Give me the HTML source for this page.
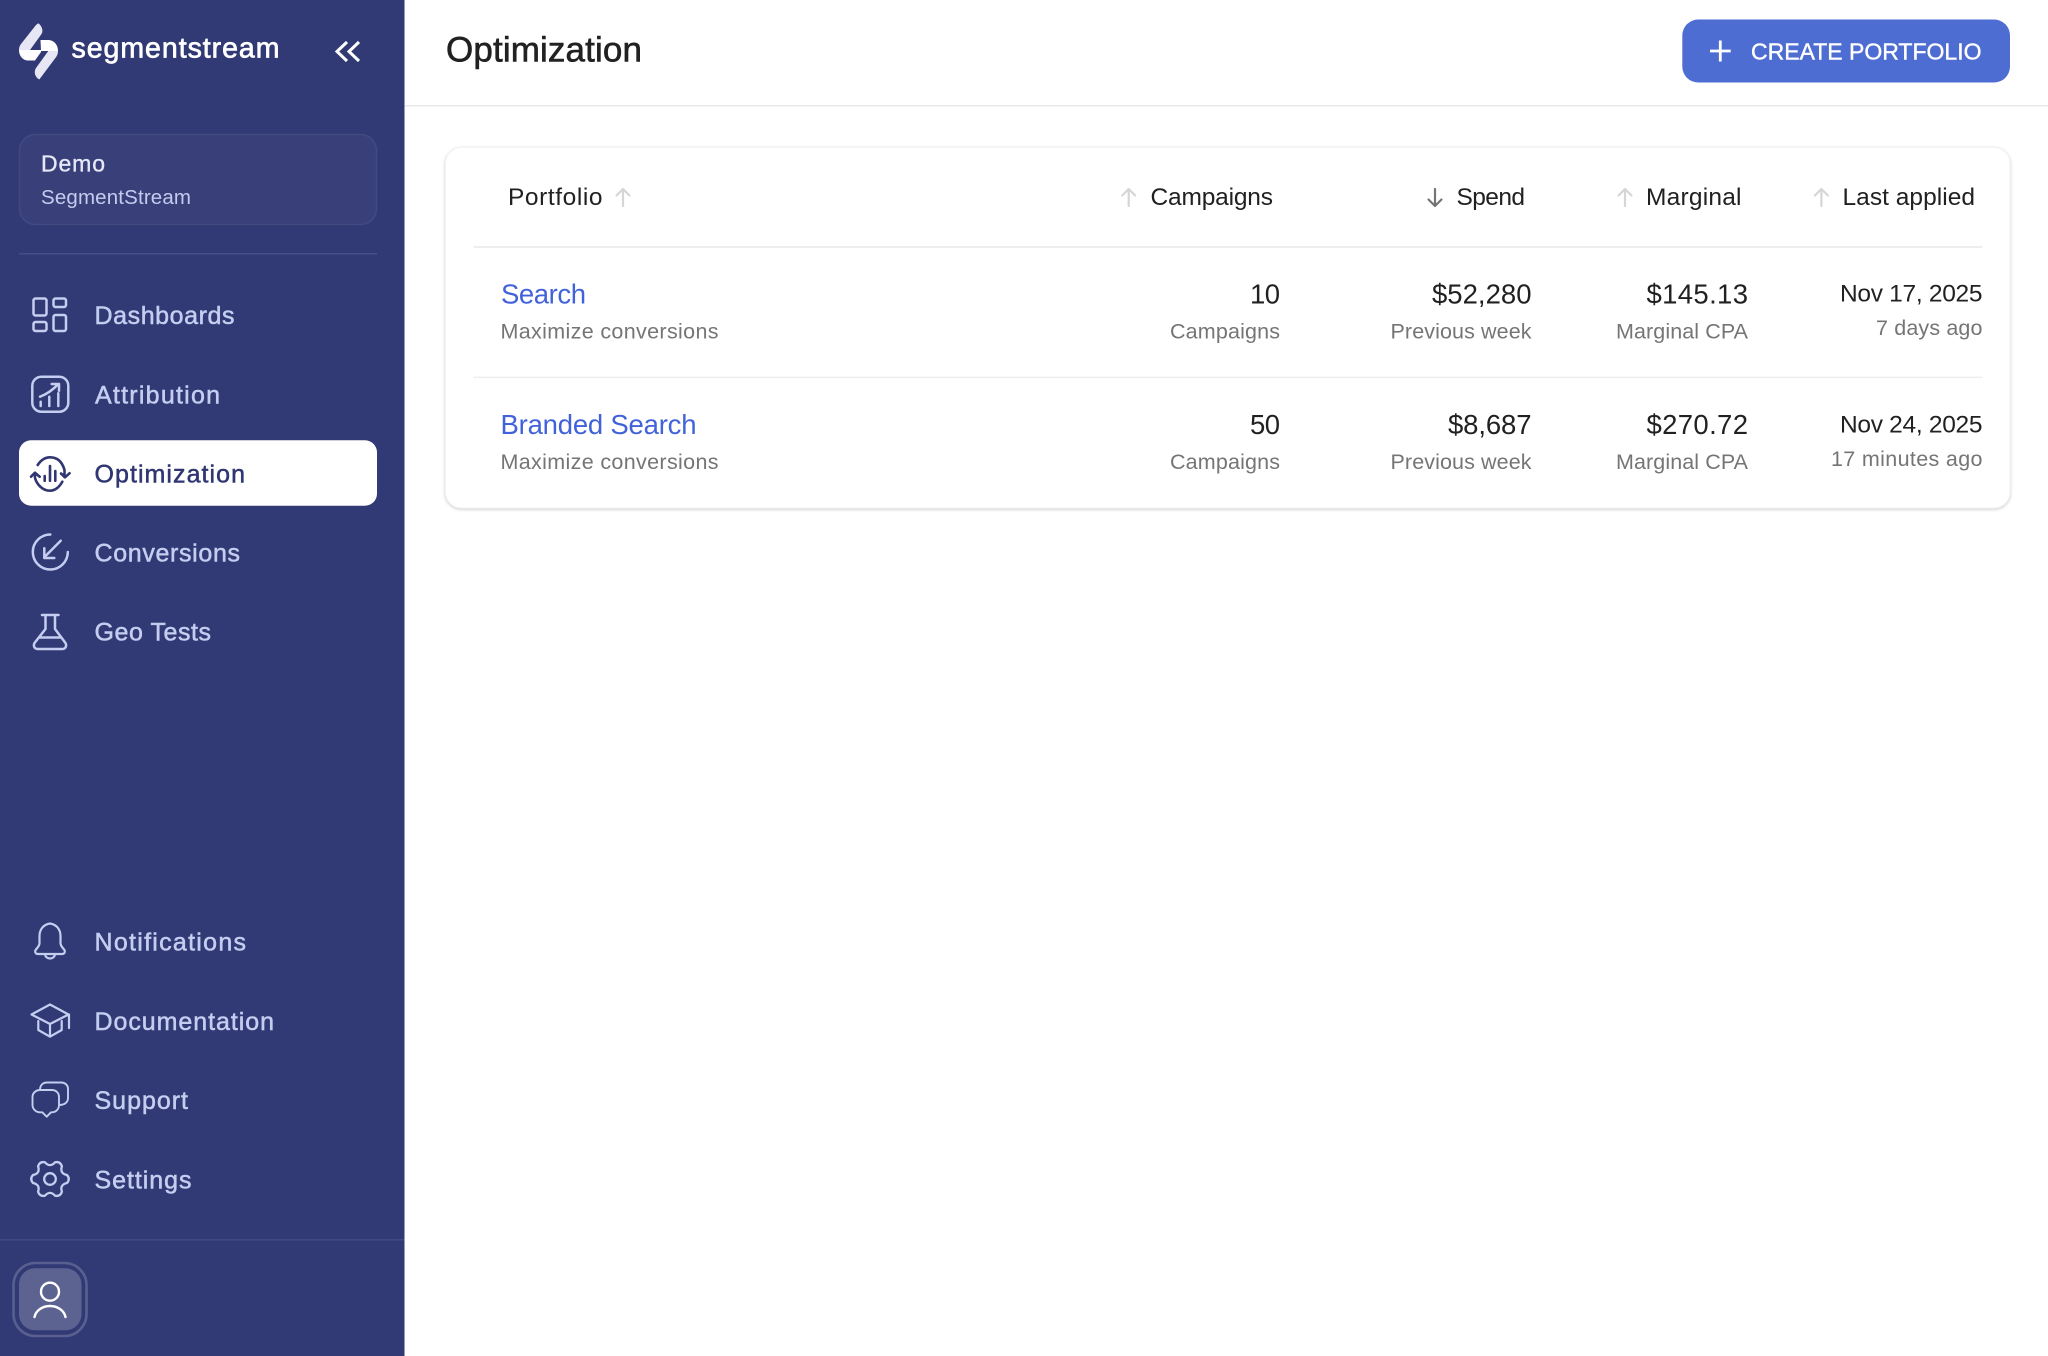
<!DOCTYPE html>
<html lang="en">
<head>
<meta charset="utf-8">
<title>Optimization</title>
<style>
html,body{margin:0;padding:0;background:#fff;width:2048px;height:1356px;overflow:hidden}
svg{display:block}
text{font-family:"Liberation Sans",Arial,sans-serif}
.nav{font-size:25px;fill:#c5cdf0;stroke:#c5cdf0;stroke-width:.5px}
.ic{fill:none;stroke:#c5cdf0;stroke-width:2.5;stroke-linecap:round;stroke-linejoin:round}
.th{font-size:24.5px;fill:#212121}
.link{font-size:27.5px;fill:#4162d8}
.val{font-size:27.5px;fill:#212121}
.date{font-size:24.5px;fill:#212121}
.sub{font-size:21.5px;fill:#757575}
.arr{fill:none;stroke:#d6d6d6;stroke-width:2.2;stroke-linecap:round;stroke-linejoin:round}
</style>
</head>
<body>
<svg width="2048" height="1356" viewBox="0 0 2048 1356" xmlns="http://www.w3.org/2000/svg">
  <rect width="2048" height="1356" fill="#fff"/>

  <!-- sidebar -->
  <rect width="404.5" height="1356" fill="#323a75"/>

  <!-- logo -->
  <path d="M38.3,23.3 C42,26 43.5,31 41.5,34 L30,50 H19 C19,47.5 19.5,46 21,44 L36,25 Z" fill="#e6e6f5"/>
  <path d="M19,50 H41 V52 L35,60.5 H28 C23,60.5 19,56 19,50 Z" fill="#fff"/>
  <path d="M40.5,40 H48 C54,40 58,45 58,51 H41 Z" fill="#fff"/>
  <path d="M58,51 C58,54 57,56 55,58.5 L39.3,79.5 C35,77 33.5,72 36,68 L48.3,51 Z" fill="#e6e6f5"/>
  <text x="71.5" y="57.5" font-size="28.5" fill="#fff" stroke="#fff" stroke-width=".7" textLength="208">segmentstream</text>
  <path d="M347,42 L337,51.5 L347,61 M359,42 L349,51.5 L359,61" fill="none" stroke="#fff" stroke-width="3"/>

  <!-- account -->
  <rect x="19.5" y="134.5" width="357" height="90" rx="16" fill="#394079" stroke="#434a82" stroke-width="1.5"/>
  <text x="41" y="171.7" font-size="23" fill="#e6e8f7" stroke="#e6e8f7" stroke-width=".35" textLength="64">Demo</text>
  <text x="41" y="204" font-size="20.5" fill="#c5cbef" textLength="150">SegmentStream</text>
  <rect x="19" y="253" width="358" height="1.5" fill="#474e86"/>

  <!-- nav -->
  <rect x="19" y="440.3" width="358" height="65.4" rx="12" fill="#fff"/>

  <g class="ic">
    <rect x="33.5" y="298.5" width="13" height="17" rx="2"/>
    <rect x="53.5" y="298.5" width="12.5" height="8.5" rx="2"/>
    <rect x="33.5" y="322" width="13" height="9" rx="2"/>
    <rect x="53.5" y="315" width="12.5" height="16" rx="2"/>

    <rect x="32.3" y="376.7" width="36" height="35" rx="9"/>
    <path d="M40.7,401.7 V406 M49.3,396.7 V406 M58.3,393.3 V406 M40,396.7 Q50,393 58.3,384 M51.7,384 H59 V390.7"/>

    <path d="M50.3,534.5 A17.5,17.5 0 1 0 67.8,552 M60.7,540.7 L44.3,557.3 M44.3,548.3 V558 H54.3"/>

    <path d="M45.5,615 V629 L34.5,643 C33,646 34.5,649 37.5,649 H62.5 C65.5,649 67,646 65.5,643 L55,629 V615 M42,615 H58.5 M39,637.5 H61"/>

    <path stroke-width="2.2" d="M50,923.5 C43,924.5 39.5,930 39.5,936 V943 C39.5,947 35.5,949 35.2,951 C35,953 36,954 38,954 H62 C64,954 65,953 64.8,951 C64.5,949 60.5,947 60.5,943 V936 C60.5,930 57,924.5 50,923.5 Z M45,954.5 C45.5,957 47.5,958.5 50,958.5 C52.5,958.5 54.5,957 55,954.5"/>

    <path stroke-width="2.2" d="M50,1004.5 L31.5,1014.5 L50,1024 L68.5,1014.5 Z M38.3,1021 V1030 L50,1036.7 L61.7,1030 V1021 M50,1024 V1036.5 M69,1014.5 V1028"/>

    <path stroke-width="1.9" d="M40,1090 H52 C56,1090 59,1093 59,1097 V1105 C59,1109 56,1112.3 52,1112.3 H51 L46.7,1116.7 L42.3,1112.3 H40 C36,1112.3 32.5,1109 32.5,1105 V1097 C32.5,1093 36,1090 40,1090 Z M40,1090 C40,1085 43,1082.5 47,1082.5 H61 C65,1082.5 68,1085 68,1089 V1098 C68,1102 65,1105 59,1105"/>

    <path stroke-width="2.3" d="M67.05,1175.06 Q70.5,1179 67.05,1182.94 Q59.53,1184.5 61.93,1191.8 Q60.25,1196.75 55.12,1195.74 Q50,1190 44.88,1195.74 Q39.75,1196.75 38.07,1191.8 Q40.47,1184.5 32.95,1182.94 Q29.5,1179 32.95,1175.06 Q40.47,1173.5 38.07,1166.2 Q39.75,1161.25 44.88,1162.26 Q50,1168 55.12,1162.26 Q60.25,1161.25 61.93,1166.2 Q59.53,1173.5 67.05,1175.06 Z"/>
    <circle cx="50" cy="1179" r="5.8" stroke-width="2.3"/>
  </g>

  <g fill="none" stroke="#2f3672" stroke-width="2.6" stroke-linecap="round" stroke-linejoin="round">
    <path d="M37.7,465 C41,460 45,457.3 50,457.3 C56.5,457.3 62,461 64.5,470 V477 M61,473.5 L65,477.3 L69.5,473.3"/>
    <path d="M35,473 V478 C37,485 43,490.7 50,490.7 C55,490.7 59.5,487 62.3,481.7 M31,476.7 L35,472.7 L39.7,476.7"/>
    <path d="M44.7,476 V480.7 M50,466 V480.7 M55.3,471 V480.7"/>
  </g>

  <text class="nav" x="94.5" y="324" textLength="140">Dashboards</text>
  <text class="nav" x="95" y="403.3" textLength="125">Attribution</text>
  <text x="94.5" y="482.3" font-size="25" fill="#2f3672" stroke="#2f3672" stroke-width=".5" textLength="150.5">Optimization</text>
  <text class="nav" x="94.5" y="561.7" textLength="145.5">Conversions</text>
  <text class="nav" x="94.5" y="640.7" textLength="116.5">Geo Tests</text>
  <text class="nav" x="94.5" y="950.7" textLength="151.5">Notifications</text>
  <text class="nav" x="94.5" y="1030" textLength="179.5">Documentation</text>
  <text class="nav" x="94.5" y="1109" textLength="93.5">Support</text>
  <text class="nav" x="94.5" y="1188.3" textLength="97">Settings</text>

  <!-- footer -->
  <rect x="0" y="1239" width="404.5" height="1.5" fill="#434a82"/>
  <rect x="13.5" y="1263" width="73" height="73" rx="22" fill="none" stroke="#595f8f" stroke-width="2.6"/>
  <rect x="19" y="1268.3" width="62.5" height="62" rx="16" fill="#5d6390"/>
  <circle cx="50" cy="1291.7" r="9" fill="none" stroke="#fff" stroke-width="2.4"/>
  <path d="M34.5,1317 C36,1310 43,1306 50,1306 C57,1306 64,1310 65.5,1317" fill="none" stroke="#fff" stroke-width="2.4" stroke-linecap="round"/>

  <!-- header -->
  <rect x="404.5" y="105" width="1643.5" height="1.5" fill="#e8e8e8"/>
  <text x="446" y="61.7" font-size="35" fill="#212121" stroke="#212121" stroke-width=".6" textLength="196">Optimization</text>
  <rect x="1682.3" y="19.5" width="327.7" height="63" rx="16" fill="#4e6dd3"/>
  <path d="M1720.3,40.5 V61.5 M1710,51 H1730.7" fill="none" stroke="#fff" stroke-width="2.8"/>
  <text x="1751" y="59.3" font-size="23" fill="#fff" stroke="#fff" stroke-width=".4" textLength="230.5">CREATE PORTFOLIO</text>

  <!-- card -->
  <rect x="445.5" y="147.5" width="1564.5" height="360.5" rx="16" fill="#fff" stroke="#f3f3f3" stroke-width="1" style="filter:drop-shadow(0 1px 1.5px rgba(0,0,0,.2))"/>
  <rect x="473.6" y="246" width="1508.8" height="2" fill="#eeeeee"/>
  <rect x="473.6" y="376.6" width="1508.8" height="1.6" fill="#eeeeee"/>

  <!-- table head -->
  <text class="th" x="508" y="205" textLength="94.5">Portfolio</text>
  <path class="arr" d="M623,206 V189 M616.5,195.5 L623,189 L629.5,195.5"/>
  <path class="arr" d="M1128.7,206 V189 M1122.2,195.5 L1128.7,189 L1135.2,195.5"/>
  <text class="th" x="1150.5" y="205" textLength="122.5">Campaigns</text>
  <path class="arr" style="stroke:#757575" d="M1435,189 V206 M1428.5,199.5 L1435,206 L1441.5,199.5"/>
  <text class="th" x="1456.5" y="205" textLength="68.5">Spend</text>
  <path class="arr" d="M1625,206 V189 M1618.5,195.5 L1625,189 L1631.5,195.5"/>
  <text class="th" x="1646" y="205" textLength="95.5">Marginal</text>
  <path class="arr" d="M1821.4,206 V189 M1814.9,195.5 L1821.4,189 L1827.9,195.5"/>
  <text class="th" x="1842.5" y="205" textLength="132.5">Last applied</text>

  <!-- row 1 -->
  <text class="link" x="501" y="303.3" textLength="85">Search</text>
  <text class="sub" x="500.5" y="338.3" textLength="218">Maximize conversions</text>
  <text class="val" x="1250" y="303.3" textLength="30">10</text>
  <text class="sub" x="1170" y="338.3" textLength="110">Campaigns</text>
  <text class="val" x="1432" y="303.3" textLength="99.5">$52,280</text>
  <text class="sub" x="1390.5" y="338.3" textLength="141">Previous week</text>
  <text class="val" x="1646.5" y="303.3" textLength="101.5">$145.13</text>
  <text class="sub" x="1616" y="338.3" textLength="132">Marginal CPA</text>
  <text class="date" x="1840" y="301.7" textLength="142.5">Nov 17, 2025</text>
  <text class="sub" x="1876" y="335" textLength="106.5">7 days ago</text>

  <!-- row 2 -->
  <text class="link" x="500.5" y="434" textLength="196">Branded Search</text>
  <text class="sub" x="500.5" y="469" textLength="218">Maximize conversions</text>
  <text class="val" x="1250" y="434" textLength="30">50</text>
  <text class="sub" x="1170" y="469" textLength="110">Campaigns</text>
  <text class="val" x="1448" y="434" textLength="83.5">$8,687</text>
  <text class="sub" x="1390.5" y="469" textLength="141">Previous week</text>
  <text class="val" x="1646.5" y="434" textLength="101.5">$270.72</text>
  <text class="sub" x="1616" y="469" textLength="132">Marginal CPA</text>
  <text class="date" x="1840" y="432.3" textLength="142.5">Nov 24, 2025</text>
  <text class="sub" x="1831" y="466" textLength="151.5">17 minutes ago</text>
</svg>
</body>
</html>
